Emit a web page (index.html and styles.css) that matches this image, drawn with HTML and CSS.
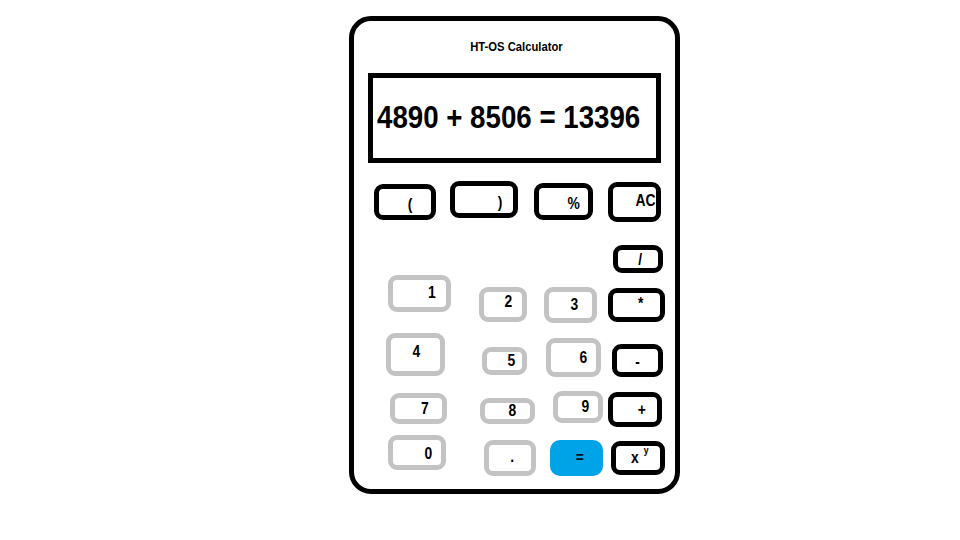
FILE: index.html
```html
<!DOCTYPE html>
<html>
<head>
<meta charset="utf-8">
<title>HT-OS Calculator</title>
<link rel="stylesheet" href="styles.css">
</head>
<body>
<div class="calc">
  <div class="title"><span>HT-OS Calculator</span></div>
  <div class="screen"><span class="screen-text">4890 + 8506 = 13396</span></div>
  <div class="row-top">
    <div class="key dark k-lp"><span>(</span></div>
    <div class="key dark k-rp"><span>)</span></div>
    <div class="key dark k-pct"><span>%</span></div>
    <div class="key dark k-ac"><span>AC</span></div>
  </div>
  <div class="keypad">
    <div class="digits">
      <div class="drow r1">
        <div class="key light k1"><span>1</span></div>
        <div class="key light k2"><span>2</span></div>
        <div class="key light k3"><span>3</span></div>
      </div>
      <div class="drow r2">
        <div class="key light k4"><span>4</span></div>
        <div class="key light k5"><span>5</span></div>
        <div class="key light k6"><span>6</span></div>
      </div>
      <div class="drow r3">
        <div class="key light k7"><span>7</span></div>
        <div class="key light k8"><span>8</span></div>
        <div class="key light k9"><span>9</span></div>
      </div>
      <div class="drow r4">
        <div class="key light k0"><span>0</span></div>
        <div class="key light kdot"><span>.</span></div>
        <div class="key blue keq"><span>=</span></div>
      </div>
    </div>
    <div class="ops">
      <div class="key dark kdiv"><span>/</span></div>
      <div class="key dark kmul"><span>*</span></div>
      <div class="key dark ksub"><span>-</span></div>
      <div class="key dark kadd"><span>+</span></div>
      <div class="key dark kpow"><span>x<sup>y</sup></span></div>
    </div>
  </div>
</div>
</body>
</html>
```
FILE: styles.css
```css
html, body {
  margin: 0;
  padding: 0;
  background: #ffffff;
}

body {
  font-family: "Liberation Sans", Arial, sans-serif;
  color: #000;
}

.calc {
  box-sizing: border-box;
  width: 331px;
  height: 478px;
  margin: 16px 0 0 349px;
  border: 5px solid #000;
  border-radius: 22px;
  padding-top: 18px;
  background: #fff;
}

.title {
  font-size: 13px;
  line-height: 15px;
  font-weight: bold;
  text-align: center;
  padding-left: 4px;
}

.title span {
  display: inline-block;
  transform: scaleX(0.865);
}

.screen {
  box-sizing: border-box;
  width: 293px;
  height: 90px;
  margin: 19px 0 0 14px;
  border: 5px solid #000;
  padding: 21px 0 0 4px;
  font-size: 32px;
  line-height: 36px;
  font-weight: bold;
  white-space: nowrap;
}

.screen-text {
  display: inline-block;
  transform: scaleX(0.865);
  transform-origin: left center;
}

.row-top {
  display: flex;
  align-items: flex-start;
  height: 41px;
  margin-top: 18px;
}

.keypad {
  display: flex;
  align-items: flex-start;
  margin-top: 23px;
}

.digits {
  width: 254px;
  display: flex;
  flex-direction: column;
}

.drow {
  display: flex;
  align-items: flex-start;
}

.r1 { margin-top: 30px; }
.r2 { margin-top: 10px; }
.r3 { margin-top: 14px; }
.r4 { margin-top: 11px; }

.ops {
  display: flex;
  flex-direction: column;
  align-items: flex-start;
}

.key {
  box-sizing: border-box;
  flex: none;
  display: flex;
  align-items: center;
  justify-content: center;
  border-radius: 9px;
  font-size: 16px;
  line-height: 16px;
  font-weight: bold;
  white-space: nowrap;
}

.key span {
  display: inline-block;
  transform: translate(var(--dx, 0px), var(--dy, 0px)) scaleX(0.865);
}

.key sup {
  font-size: 10px;
  line-height: 10px;
  vertical-align: 9px;
  margin-left: 6px;
}

.dark { border: 5px solid #000; }
.light { border: 5px solid #c3c3c3; }
.blue { background: #00a2e8; border-radius: 10px; color: #0a1020; }

/* top row */
.k-lp  { width: 62px; height: 36px; margin: 3px 0 0 20px; --dx: 5.5px;  --dy: 3px; }
.k-rp  { width: 68px; height: 37px; margin: 0 0 0 14px;   --dx: 16.5px; --dy: 2.5px; }
.k-pct { width: 59px; height: 37px; margin: 2px 0 0 16px; --dx: 10.5px; --dy: 2px; }
.k-ac  { width: 53px; height: 40px; margin: 1px 0 0 15px; --dx: 11px;   --dy: -1px; }

/* digits */
.k1 { width: 63px; height: 37px; margin: 0 0 0 34px;    --dx: 12.5px; --dy: -1.5px; }
.k2 { width: 48px; height: 35px; margin: 12px 0 0 28px; --dx: 5px;    --dy: -3px; }
.k3 { width: 53px; height: 36px; margin: 12px 0 0 17px; --dx: 4px;    --dy: 0px; }

.k4 { width: 59px; height: 43px; margin: 0 0 0 32px;    --dx: 1px;    --dy: -3px; }
.k5 { width: 45px; height: 28px; margin: 14px 0 0 37px; --dx: 7px;    --dy: 0px; }
.k6 { width: 55px; height: 39px; margin: 5px 0 0 19px;  --dx: 10px;   --dy: -0.5px; }

.k7 { width: 57px; height: 31px; margin: 2px 0 0 36px;  --dx: 6.5px;  --dy: 0px; }
.k8 { width: 55px; height: 26px; margin: 7px 0 0 33px;  --dx: 5px;    --dy: -0.5px; }
.k9 { width: 50px; height: 32px; margin: 0 0 0 18px;    --dx: 7px;    --dy: 0px; }

.k0   { width: 58px; height: 35px; margin: 0 0 0 34px;    --dx: 11px; --dy: 0.5px; }
.kdot { width: 52px; height: 36px; margin: 5px 0 0 38px;  --dx: 2px;  --dy: -1px; }
.keq  { width: 53px; height: 36px; margin: 5px 0 0 14px;  --dx: 3px;  --dy: 0px; }

/* operators */
.kdiv { width: 50px; height: 28px; margin: 0 0 0 5px;    --dx: 2px;   --dy: 0.5px; }
.kmul { width: 57px; height: 34px; margin: 15px 0 0 0;   --dx: 4.5px; --dy: -1px; }
.ksub { width: 51px; height: 33px; margin: 22px 0 0 4px; --dx: 0px;   --dy: 1px; }
.kadd { width: 54px; height: 35px; margin: 15px 0 0 0;   --dx: 7px;   --dy: 0px; }
.kpow { width: 54px; height: 34px; margin: 14px 0 0 3px; --dx: 1.5px; --dy: -2px; }
```
